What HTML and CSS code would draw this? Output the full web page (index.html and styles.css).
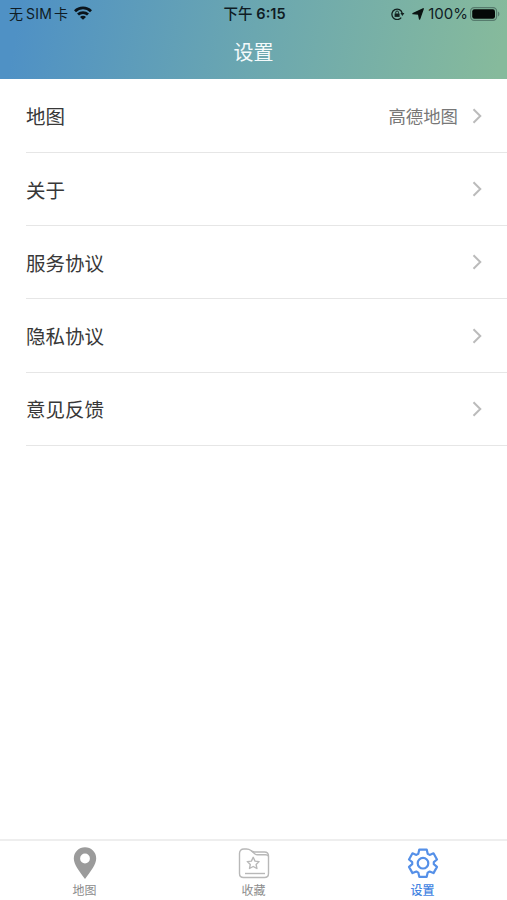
FILE: index.html
```html
<!DOCTYPE html>
<html lang="zh-CN">
<head>
    <meta charset="UTF-8">
    <meta name="viewport" content="width=device-width, initial-scale=1.0">
    <title>设置</title>
    <link rel="stylesheet" href="styles.css">
</head>
<body>
    <header class="header">
        <div class="status-bar">
            <div class="status-left">
                <span class="carrier">无<span class="sim">SIM</span>卡</span>
                <svg class="wifi" viewBox="0 0 18 14" fill="none" stroke="#0b141b" stroke-width="2.8">
                    <path d="M1 5.2a11.4 11.4 0 0 1 16 0"/>
                    <path d="M4 8.6a7.2 7.2 0 0 1 10 0"/>
                    <path d="M9 13.8L6 10.9a4.2 4.2 0 0 1 6 0z" fill="#0b141b" stroke="none"/>
                </svg>
            </div>
            <div class="time">下午 <span class="clock">6:15</span></div>
            <div class="status-right">
                <svg class="lock" viewBox="0 0 14 12" fill="none" stroke="#12201f" stroke-width="1.3">
                    <path d="M10.2 9.6A5.2 5.2 0 1 1 11.2 5.2"/>
                    <path d="M9.4 5h4l-2 3z" fill="#12201f" stroke="none"/>
                    <path d="M3.6 5.5h5v3.4h-5z" fill="#12201f" stroke="none"/>
                    <path d="M4.7 5.6V4.4a1.4 1.4 0 0 1 2.8 0v1.2" stroke-width="1"/>
                </svg>
                <svg class="arrow" viewBox="0 0 12 12"><path d="M11.2.8L7.6 11 6.6 6 1 5.6z" fill="#0b1211" stroke="#0b1211" stroke-width="1.4" stroke-linejoin="round"/></svg>
                <span class="percent">100%</span>
                <svg class="battery" viewBox="0 0 30 14">
                    <rect x=".6" y=".6" width="26" height="12.8" rx="3.6" fill="none" stroke="#567b6d" stroke-width="1.2"/>
                    <rect x="2.2" y="2.2" width="22.8" height="9.6" rx="2.2" fill="#050807"/>
                    <path d="M28 4.6a2.7 2.7 0 0 1 0 4.8z" fill="#567b6d"/>
                </svg>
            </div>
        </div>
        <h1 class="title">设置</h1>
    </header>

    <main class="list">
        <div class="item">
            <span>地图</span>
            <span class="value">高德地图</span>
            <svg class="chevron" viewBox="0 0 10 16"><path d="M1.5 1.2L8.3 8l-6.8 6.8"/></svg>
        </div>
        <div class="item">
            <span>关于</span>
            <svg class="chevron" viewBox="0 0 10 16"><path d="M1.5 1.2L8.3 8l-6.8 6.8"/></svg>
        </div>
        <div class="item">
            <span>服务协议</span>
            <svg class="chevron" viewBox="0 0 10 16"><path d="M1.5 1.2L8.3 8l-6.8 6.8"/></svg>
        </div>
        <div class="item">
            <span>隐私协议</span>
            <svg class="chevron" viewBox="0 0 10 16"><path d="M1.5 1.2L8.3 8l-6.8 6.8"/></svg>
        </div>
        <div class="item">
            <span>意见反馈</span>
            <svg class="chevron" viewBox="0 0 10 16"><path d="M1.5 1.2L8.3 8l-6.8 6.8"/></svg>
        </div>
    </main>

    <nav class="tabbar">
        <a class="tab">
            <svg class="tab-icon" viewBox="0 0 32 32">
                <path d="M16 32C10.5 24.5 4.8 17.5 4.8 11.5a11.2 11.2 0 0 1 22.4 0C27.2 17.5 21.5 24.5 16 32zM16 6.6a4.9 4.9 0 1 0 0 9.8 4.9 4.9 0 0 0 0-9.8z" fill="#9b9b9b" fill-rule="evenodd"/>
            </svg>
            <span>地图</span>
        </a>
        <a class="tab">
            <svg class="tab-icon" viewBox="0 0 32 32" fill="none" stroke="#b8b8b8" stroke-width="1.4" stroke-linejoin="round">
                <path d="M1.5 26.5v-20Q1.5 2 6 2h2.5Q11 2 13 3.5l1.5 1q1 .5 2 .5h10q4 0 4 4v17.5q0 4-4 4h-21q-4 0-4-4z"/>
                <path d="M13 3.5l4 3.5q1 .8 2.5.8h8q2.5 0 3 1.5"/>
                <path d="M15.2 10.3l1.8 3.8 4.1.5-3 2.8.8 4.1-3.7-2-3.7 2 .8-4.1-3-2.8 4.1-.5z"/>
                <path d="M7 26.5h20"/>
            </svg>
            <span>收藏</span>
        </a>
        <a class="tab active">
            <svg class="tab-icon" viewBox="0 0 32 32" fill="none" stroke="#5590e8" stroke-width="2.2" stroke-linejoin="round">
                <path d="M12.3 2.6h7.4l1 4.2 1.9 1.1 3.9-1.6 3.5 6.2-3.2 2.7v2l3.200 2.700-3.500 6.200-3.900-1.600-1.900 1.100-1 4.200h-7.400l-1-4.200-1.900-1.100-3.900 1.600L2 19.900l3.200-2.700v-2L2 12.500l3.500-6.200 3.900 1.600 1.900-1.100z"/>
                <circle cx="16" cy="16.2" r="5.3"/>
            </svg>
            <span>设置</span>
        </a>
    </nav>
</body>
</html>
```
FILE: styles.css
```css
* {
    box-sizing: border-box;
}
body {
    margin: 0;
    height: 100vh;
    display: flex;
    flex-direction: column;
    background-color: #fff;
    color: #383838;
    font-family: Inter, "Noto Sans CJK SC", sans-serif;
}
.header {
    height: 79px;
    background: linear-gradient(100deg, #4f91c5 4%, #6ba7b0 50%, #86ba9c 98%);
}
.status-bar {
    height: 28px;
    display: grid;
    grid-template-columns: 1fr auto 1fr;
    align-items: center;
    padding: 0 7px 0 9px;
    font-size: 14px;
    line-height: 28px;
    color: #0f1c24;
}
.status-left,
.status-right {
    display: flex;
    align-items: center;
}
.status-right {
    justify-content: flex-end;
}
.sim {
    margin: 0 2px 0 3px;
    letter-spacing: 0.2px;
}
.wifi {
    width: 18px;
    height: 14px;
    margin: -2px 0 0 6px;
}
.time {
    font-size: 14.5px;
    font-weight: 500;
}
.clock {
    font-weight: 600;
}
.lock {
    width: 14px;
    height: 12px;
}
.arrow {
    width: 12px;
    height: 12px;
    margin: 0 4px 0 7px;
}
.percent {
    font-size: 15px;
}
.battery {
    width: 30px;
    height: 14px;
    margin: -1px 0 0 2px;
}
.title {
    margin: 0;
    font-size: 20px;
    font-weight: 400;
    line-height: 51px;
    text-align: center;
    color: #f4fafb;
}
.list {
    flex: 1;
    padding: 0.6px 0 0 26px;
}
.item {
    height: 73.3px;
    display: flex;
    align-items: center;
    padding-right: 25px;
    border-bottom: 1px solid #e6e6e6;
    font-size: 19.5px;
}
.value {
    margin-left: auto;
    font-size: 17.4px;
    color: #777;
}
.chevron {
    width: 10px;
    height: 16px;
    margin-left: auto;
    fill: none;
    stroke: #bbb;
    stroke-width: 2;
}
.value + .chevron {
    margin-left: 14px;
}
.tabbar {
    height: 61px;
    display: flex;
    border-top: 2px solid #eee;
}
.tab {
    flex: 1;
    display: flex;
    flex-direction: column;
    align-items: center;
    padding-top: 6px;
    font-size: 12px;
    line-height: 15px;
    color: #8c8c8c;
}
.tab-icon {
    flex-shrink: 0;
    width: 32px;
    height: 32px;
    margin-bottom: 4px;
}
.active {
    color: #4585e2;
    font-weight: 500;
}
```
